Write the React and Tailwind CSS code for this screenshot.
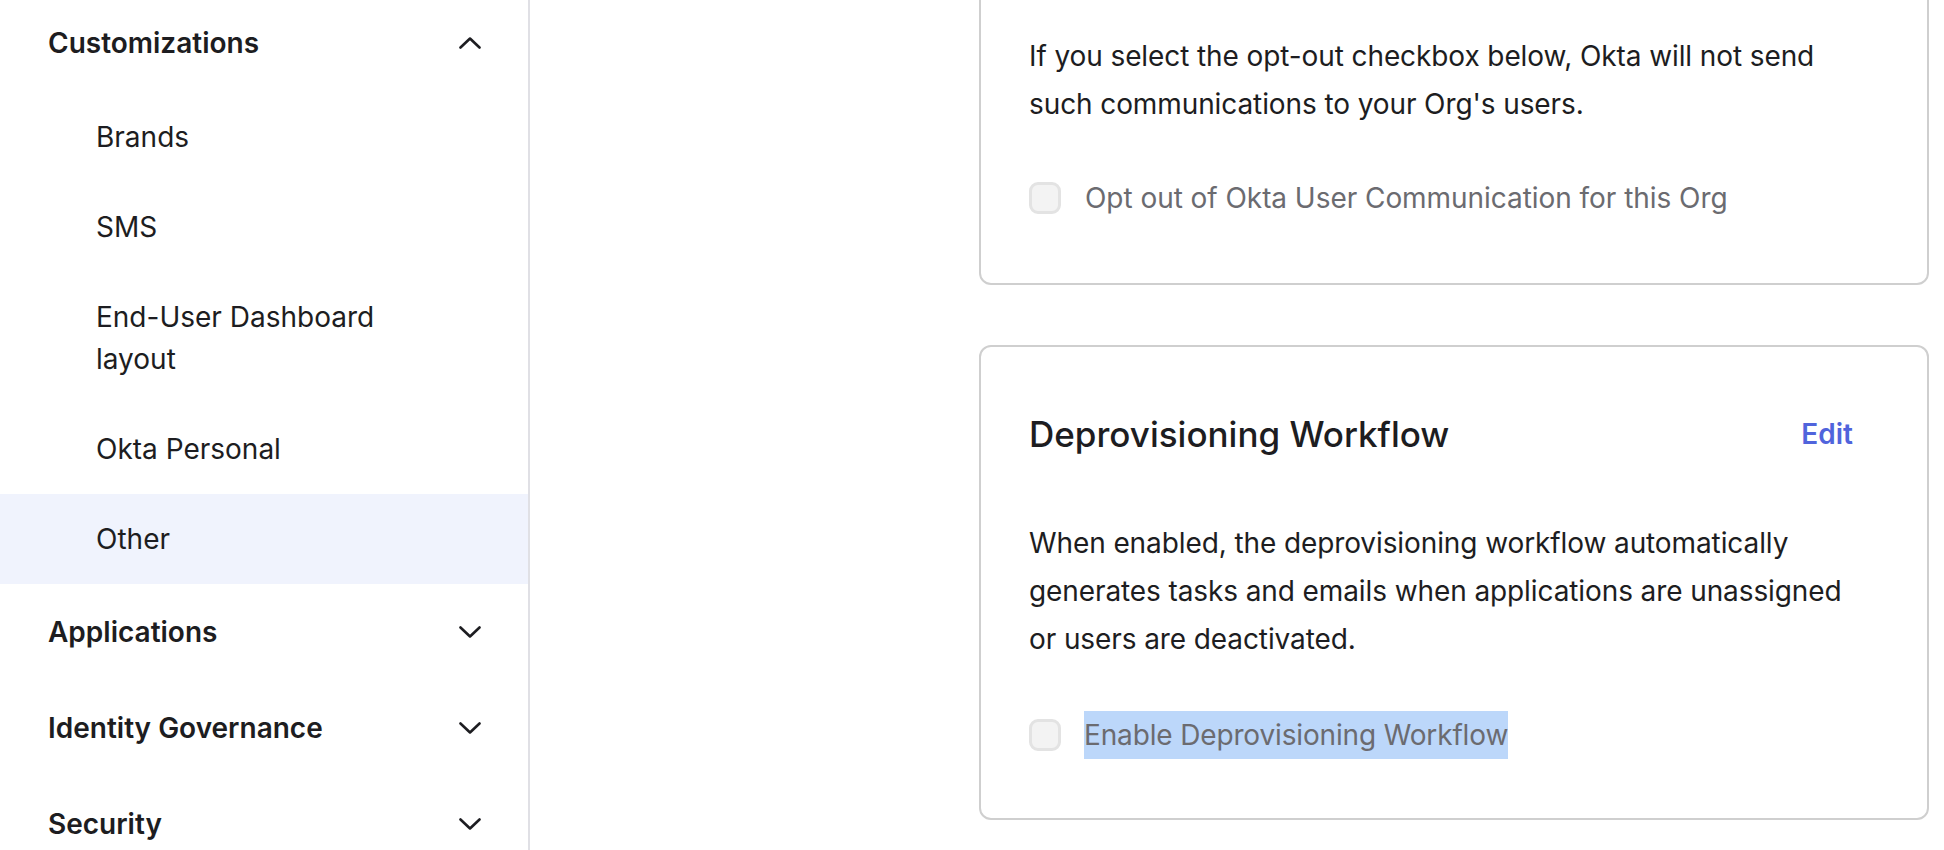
import { useState } from "react";

const subItems = [
  { label: "Brands" },
  { label: "SMS" },
  { label: "End-User Dashboard layout", wrap: true },
  { label: "Okta Personal" },
  { label: "Other", active: true },
];

const groups = ["Applications", "Identity Governance", "Security"];

function Chevron({ up }) {
  return (
    <svg width="22" height="12" viewBox="0 0 22 12" fill="none" className={up ? "" : "rotate-180"}>
      <path d="M1.5 10.5 L11 1.5 L20.5 10.5" stroke="#1d1d21" strokeWidth="2.6" strokeLinecap="round" strokeLinejoin="round" />
    </svg>
  );
}

function Checkbox({ checked, onChange }) {
  return (
    <button
      type="button"
      onClick={onChange}
      className="h-[32px] w-[32px] shrink-0 rounded-[9px] border-[3px] border-[#e3e3e3] bg-[#f3f3f3]"
    />
  );
}

export default function App() {
  const [optOut, setOptOut] = useState(false);
  const [deprov, setDeprov] = useState(false);

  return (
    <div className="flex h-[850px] w-full overflow-hidden bg-white font-['Inter','Noto_Sans',sans-serif] text-[#1d1d21]">
      {/* SIDEBAR */}
      <aside className="w-[530px] shrink-0 border-r-2 border-[#e0e0e5]">
        <div className="-mt-[5px]">
          <div className="flex h-[96px] items-center justify-between pl-[48px] pr-[47px]">
            <span className="text-[28px] font-semibold leading-[42px]">Customizations</span>
            <Chevron up />
          </div>

          <ul className="mt-[1px]">
            {subItems.map((item) => (
              <li
                key={item.label}
                className={`py-[24px] pl-[96px] pr-[48px] text-[28px] leading-[42px] ${item.active ? "bg-[#f0f3fd]" : ""}`}
              >
                {item.wrap ? (
                  <>
                    End-User Dashboard
                    <br />
                    layout
                  </>
                ) : (
                  item.label
                )}
              </li>
            ))}
          </ul>

          {groups.map((g) => (
            <div key={g} className="flex h-[96px] items-center justify-between pl-[48px] pr-[47px]">
              <span className="text-[28px] font-semibold leading-[42px]">{g}</span>
              <Chevron />
            </div>
          ))}
        </div>
      </aside>

      {/* CONTENT */}
      <main className="flex-1 overflow-hidden">
        <div className="ml-[449px] w-[950px]">
          {/* opt-out card */}
          <section className="-mt-[40px] rounded-[12px] border-2 border-[#cfcfcf] pb-[61px] pl-[48px] pr-[74px] pt-[70px]">
            <p className="text-[28px] leading-[48px] tracking-[-0.1px]">
              If you select the opt-out checkbox below, Okta will not send
              <br />
              such communications to your Org's users.
            </p>
            <label className="mt-[46px] flex items-center gap-[24px]">
              <Checkbox checked={optOut} onChange={() => setOptOut(!optOut)} />
              <span className="text-[28px] leading-[48px] tracking-[-0.05px] text-[#6b6b70]">
                Opt out of Okta User Communication for this Org
              </span>
            </label>
          </section>

          {/* deprovisioning card */}
          <section className="mt-[60px] rounded-[12px] border-2 border-[#cfcfcf] pb-[59px] pl-[48px] pr-[74px] pt-[63px]">
            <div className="flex h-[48px] items-center justify-between">
              <h2 className="text-[35px] font-medium leading-[48px]">Deprovisioning Workflow</h2>
              <a href="#" className="text-[28px] font-semibold leading-[48px] text-[#5064dc]">
                Edit
              </a>
            </div>
            <p className="mt-[61px] text-[28px] leading-[48px] tracking-[-0.1px]">
              When enabled, the deprovisioning workflow automatically
              <br />
              generates tasks and emails when applications are unassigned
              <br />
              or users are deactivated.
            </p>
            <label className="mt-[48px] flex items-center gap-[23px]">
              <Checkbox checked={deprov} onChange={() => setDeprov(!deprov)} />
              <span className="bg-[#bcd7fa] text-[28px] leading-[48px] tracking-[-0.15px] text-[#6b6b70]">
                Enable Deprovisioning Workflow
              </span>
            </label>
          </section>
        </div>
      </main>
    </div>
  );
}
